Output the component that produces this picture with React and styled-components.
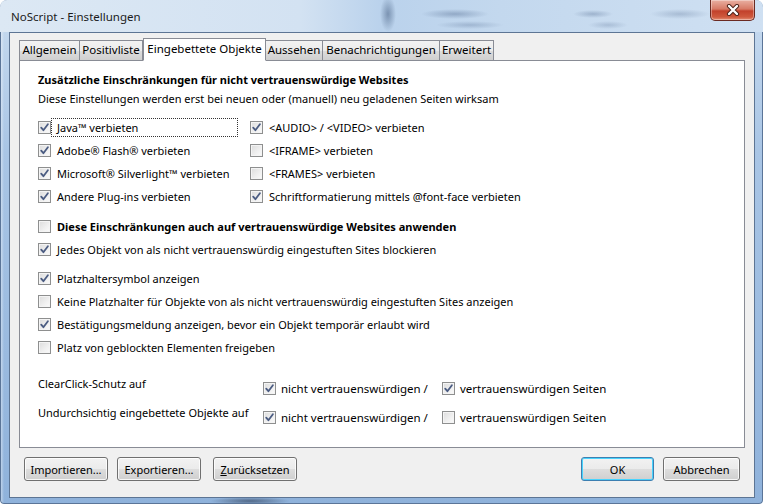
import React from 'react';
import styled, { createGlobalStyle } from 'styled-components';

const GlobalStyle = createGlobalStyle`
  html, body {
    margin: 0;
    padding: 0;
    background: #ffffff;
  }
  body {
    width: 763px;
    height: 504px;
    overflow: hidden;
    font-family: "Noto Sans", "Segoe UI", sans-serif;
    font-size: 11px;
    color: #000;
  }
  * {
    box-sizing: border-box;
  }
`;

// Glasrahmen des Fensters
const Window = styled.div`
  width: 763px;
  height: 504px;
  padding: 0 8px 6px 9px;
  display: flex;
  flex-direction: column;
  border-radius: 7px 7px 4px 4px;
  background:
    radial-gradient(ellipse 40px 4px at 250px 501px, rgba(40,55,80,0.6), rgba(40,55,80,0)),
    linear-gradient(90deg, rgba(255,255,255,0.55) 0px, rgba(255,255,255,0) 4px),
    linear-gradient(180deg, #c9dcf0 0%, #a9c5e5 30%, #8fb2db 100%);
  box-shadow: inset 0 0 0 1px #5b7598;
`;

const TitleBar = styled.div`
  height: 32px;
  display: flex;
  justify-content: space-between;
  align-items: flex-start;
  margin: 0 -8px 0 -9px;
  padding: 0 8px 0 9px;
  border-radius: 7px 7px 0 0;
  background:
    radial-gradient(ellipse 8px 18px at 388px 14px, rgba(70,95,130,0.55), rgba(70,95,130,0)),
    radial-gradient(ellipse 34px 5px at 455px 14px, rgba(60,85,125,0.35), rgba(60,85,125,0)),
    radial-gradient(ellipse 34px 4px at 470px 25px, rgba(60,85,125,0.25), rgba(60,85,125,0)),
    radial-gradient(ellipse 20px 4px at 593px 14px, rgba(60,85,125,0.3), rgba(60,85,125,0)),
    radial-gradient(ellipse 20px 4px at 608px 25px, rgba(60,85,125,0.22), rgba(60,85,125,0)),
    radial-gradient(ellipse 30px 5px at 680px 14px, rgba(60,85,125,0.25), rgba(60,85,125,0)),
    linear-gradient(90deg, #dce8f4 0px, #d3e2f2 300px, #bad2ec 380px, #c3d8ee 500px, #cfe0f2 763px);
`;

const Title = styled.div`
  padding: 9px 0 0 2px;
  font-size: 11.5px;
  color: #1b1b1b;
`;

const CloseButton = styled.div`
  width: 45px;
  height: 21px;
  border: 1px solid #6a2a22;
  border-top: none;
  border-radius: 0 0 5px 5px;
  background: linear-gradient(180deg, #e9b0a2 0%, #d77a66 45%, #c2412b 55%, #cf5a3e 85%, #e49077 100%);
  box-shadow: inset 0 0 0 1px rgba(255,255,255,0.35);
  display: flex;
  align-items: center;
  justify-content: center;
`;

// Innenbereich des Dialogs
const Client = styled.div`
  flex: 1;
  display: flex;
  flex-direction: column;
  background: #f0f0f0;
  border: 1px solid #5d7594;
  padding: 6px 9px 0 9px;
`;

const TabStrip = styled.div`
  display: flex;
  align-items: flex-end;
  height: 22px;
  margin-bottom: -1px;
  position: relative;
  z-index: 1;
`;

const Tab = styled.div`
  width: ${p => p.$w}px;
  height: ${p => (p.$active ? 23 : 21)}px;
  border: 1px solid #898c95;
  border-left: ${p => (p.$first || p.$active ? '1px solid #898c95' : 'none')};
  border-bottom: ${p => (p.$active ? '1px solid #ffffff' : '1px solid #898c95')};
  background: ${p => (p.$active
    ? '#ffffff'
    : 'linear-gradient(180deg, #f2f2f2 0%, #ebebeb 50%, #dddddd 51%, #cfcfcf 100%)')};
  padding-top: ${p => (p.$active ? 2 : 1)}px;
  text-align: center;
  white-space: nowrap;
  line-height: 16px;
  font-size: 11.5px;
`;

const Panel = styled.div`
  height: 388px;
  background: #ffffff;
  border: 1px solid #898c95;
  padding: 11px 0 0 18px;
  display: flex;
  flex-direction: column;
`;

const Heading = styled.div`
  font-weight: 700;
  line-height: 16px;
`;

const Subtitle = styled.div`
  line-height: 16px;
  margin-top: 3px;
`;

const OptionGrid = styled.div`
  display: grid;
  grid-template-columns: 212px 1fr;
  grid-auto-rows: 23px;
  margin-top: 9px;
`;

const OptionList = styled.div`
  display: flex;
  flex-direction: column;
  margin-top: ${p => p.$gap || 0}px;
`;

const Option = styled.label`
  display: flex;
  align-items: center;
  height: 23px;
  padding-right: 13px;
  white-space: nowrap;
`;

const OptionText = styled.span`
  flex: ${p => (p.$focused ? 1 : 'none')};
  margin-left: 1px;
  padding: 0 0 0 5px;
  line-height: 17px;
  outline: ${p => (p.$focused ? '1px dotted #333' : 'none')};
  font-weight: ${p => (p.$bold ? 700 : 400)};
`;

const Box = styled.span`
  width: 13px;
  height: 13px;
  flex: none;
  border: 1px solid #8e8f8f;
  background: linear-gradient(135deg, #dcdcdc 0%, #f0f0f0 60%, #fbfbfb 100%);
  box-shadow: inset 0 0 0 1px #f4f4f4;
  display: flex;
  align-items: center;
  justify-content: center;
`;

const ScopeGrid = styled.div`
  display: grid;
  grid-template-columns: 225px 179px 1fr;
  grid-auto-rows: 26px;
  row-gap: 3px;
  margin-top: 16px;
  align-items: center;
`;

const ScopeLabel = styled.div`
  align-self: start;
  margin-top: 1px;
  line-height: 16px;
  font-size: 11px;
  white-space: nowrap;
`;

const ScopeOption = styled.label`
  display: flex;
  align-items: center;
  white-space: nowrap;
  font-size: 11.5px;
  span + span {
    margin-left: 5px;
  }
`;

const ButtonRow = styled.div`
  display: flex;
  align-items: center;
  margin-top: 9px;
  padding: 0 5px;
`;

const Button = styled.button`
  width: ${p => p.$w}px;
  height: 24px;
  margin-left: ${p => p.$ml || 0}px;
  padding: 0;
  font-family: inherit;
  font-size: 11px;
  color: #000;
  border: 1px solid ${p => (p.$default ? '#3c7fb1' : '#707070')};
  border-radius: 3px;
  background: linear-gradient(180deg, #f2f2f2 0%, #ebebeb 50%, #dddddd 51%, #cfcfcf 100%);
  box-shadow: inset 0 0 0 1px ${p => (p.$default ? '#48d3fd' : 'rgba(255,255,255,0.8)')};
`;

const Spacer = styled.div`
  flex: 1;
`;

const Check = ({ on }) => (
  <Box>
    {on && (
      <svg width="11" height="11" viewBox="0 0 11 11">
        <path d="M2.2 5.6 L4.4 8.2 L8.9 2.3" fill="none" stroke="#4b5c82" strokeWidth="1.8" strokeLinecap="round" strokeLinejoin="round" />
      </svg>
    )}
  </Box>
);

const CheckOption = ({ on, children, focused, bold }) => (
  <Option>
    <Check on={on} />
    <OptionText $focused={focused} $bold={bold}>{children}</OptionText>
  </Option>
);

const tabs = [
  { label: 'Allgemein', w: 61 },
  { label: 'Positivliste', w: 63 },
  { label: 'Eingebettete Objekte', w: 123, active: true },
  { label: 'Aussehen', w: 57 },
  { label: 'Benachrichtigungen', w: 117 },
  { label: 'Erweitert', w: 54 },
];

const blockers = [
  ['Java™ verbieten', true, true],
  ['<AUDIO> / <VIDEO> verbieten', true],
  ['Adobe® Flash® verbieten', true],
  ['<IFRAME> verbieten', false],
  ['Microsoft® Silverlight™ verbieten', true],
  ['<FRAMES> verbieten', false],
  ['Andere Plug-ins verbieten', true],
  ['Schriftformatierung mittels @font-face verbieten', true],
];

const placeholders = [
  ['Platzhaltersymbol anzeigen', true],
  ['Keine Platzhalter für Objekte von als nicht vertrauenswürdig eingestuften Sites anzeigen', false],
  ['Bestätigungsmeldung anzeigen, bevor ein Objekt temporär erlaubt wird', true],
  ['Platz von geblockten Elementen freigeben', false],
];

const scopes = [
  ['ClearClick-Schutz auf', true, true],
  ['Undurchsichtig eingebettete Objekte auf', true, false],
];

export default function App() {
  return (
    <>
      <GlobalStyle />
      <Window>
        <TitleBar>
          <Title>NoScript - Einstellungen</Title>
          <CloseButton>
            <svg width="16" height="12" viewBox="0 0 16 12">
              <path d="M4 2 L12 10 M12 2 L4 10" stroke="#4a2018" strokeWidth="4.2" strokeLinecap="round" />
              <path d="M4 2 L12 10 M12 2 L4 10" stroke="#ffffff" strokeWidth="2.4" strokeLinecap="round" />
            </svg>
          </CloseButton>
        </TitleBar>
        <Client>
          <TabStrip>
            {tabs.map((t, i) => (
              <Tab key={t.label} $w={t.w} $active={t.active} $first={i === 0}>{t.label}</Tab>
            ))}
          </TabStrip>
          <Panel>
            <Heading>Zusätzliche Einschränkungen für nicht vertrauenswürdige Websites</Heading>
            <Subtitle>Diese Einstellungen werden erst bei neuen oder (manuell) neu geladenen Seiten wirksam</Subtitle>
            <OptionGrid>
              {blockers.map(([label, on, focused]) => (
                <CheckOption key={label} on={on} focused={focused}>{label}</CheckOption>
              ))}
            </OptionGrid>
            <OptionList $gap={7}>
              <CheckOption on={false} bold>Diese Einschränkungen auch auf vertrauenswürdige Websites anwenden</CheckOption>
              <CheckOption on>Jedes Objekt von als nicht vertrauenswürdig eingestuften Sites blockieren</CheckOption>
            </OptionList>
            <OptionList $gap={6}>
              {placeholders.map(([label, on]) => (
                <CheckOption key={label} on={on}>{label}</CheckOption>
              ))}
            </OptionList>
            <ScopeGrid>
              {scopes.map(([label, untrusted, trusted]) => (
                <React.Fragment key={label}>
                  <ScopeLabel>{label}</ScopeLabel>
                  <ScopeOption>
                    <Check on={untrusted} />
                    <span>nicht vertrauenswürdigen /</span>
                  </ScopeOption>
                  <ScopeOption>
                    <Check on={trusted} />
                    <span>vertrauenswürdigen Seiten</span>
                  </ScopeOption>
                </React.Fragment>
              ))}
            </ScopeGrid>
          </Panel>
          <ButtonRow>
            <Button $w={84}>Importieren...</Button>
            <Button $w={84} $ml={9}>Exportieren...</Button>
            <Button $w={84} $ml={12}><u>Z</u>urücksetzen</Button>
            <Spacer />
            <Button $w={73} $default>OK</Button>
            <Button $w={77} $ml={9}>Abbrechen</Button>
          </ButtonRow>
        </Client>
      </Window>
    </>
  );
}
